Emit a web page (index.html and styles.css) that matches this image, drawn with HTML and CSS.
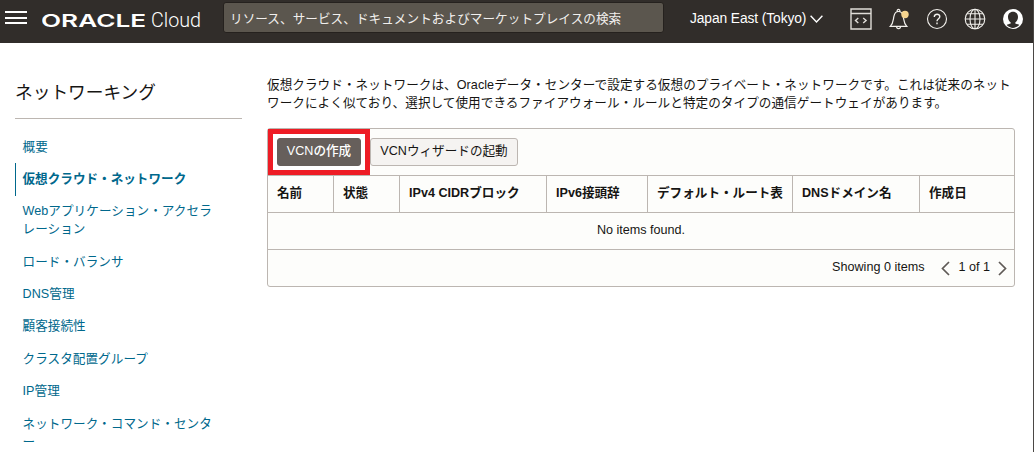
FILE: index.html
```html
<!DOCTYPE html>
<html lang="ja">
<head>
<meta charset="utf-8">
<title>Oracle Cloud</title>
<link rel="stylesheet" href="styles.css">
</head>
<body>
<div class="app">
<header class="topbar">
  <svg class="menu" width="22" height="14" viewBox="0 0 22 14"><path d="M0 1h22M0 7h22M0 12h22" stroke="#fff" stroke-width="2"/></svg>
  <svg class="logo" width="160" height="24" viewBox="0 0 160 24"><text class="oracle" x="-1" y="19" textLength="105" lengthAdjust="spacingAndGlyphs">ORACLE</text><text class="cloud" x="109" y="19" textLength="50" lengthAdjust="spacingAndGlyphs">Cloud</text></svg>
  <div class="search">リソース、サービス、ドキュメントおよびマーケットプレイスの検索</div>
  <div class="region">Japan East (Tokyo)</div>
  <svg class="chev" width="13" height="8" viewBox="0 0 13 8"><path d="M.6.8 6.5 7 12.4.8" fill="none" stroke="#fff" stroke-width="1.4"/></svg>
  <div class="tools">
    <svg width="22" height="22" viewBox="0 0 22 22"><path d="M1 1h20v20H1zM1 5.5h20M8.300 10 5.500 12.500l2.800 2.600M13.200 10l2.900 2.500-2.900 2.600" fill="none" stroke="#e0ddd8" stroke-width="1.400"/></svg>
    <svg width="22" height="22" viewBox="0 0 22 22"><path d="M2.300 18.300c3.200-3.200 2.800-6.200 3.600-10C6.600 5 8 3.500 10.500 3.500S14.500 5 15.200 8.300c.8 3.800.4 6.800 3.600 10zM9.200 3.300c-.5-2.500 3.100-2.500 2.600 0M8.600 18.600c0 2.800 3.900 2.800 3.900 0" fill="none" stroke="#f2f0ec" stroke-width="1.200"/><circle cx="17" cy="6.500" r="3.700" fill="#f6d58f"/></svg>
    <svg width="22" height="22" viewBox="0 0 22 22"><circle cx="11" cy="11" r="9.500" fill="none" stroke="#f2f0ec" stroke-width="1.100"/><path d="M8.300 8.900C8.300 5.200 13.900 5.500 13.800 8.800 13.700 10.800 11 10.700 11 13.200M11 14.600v1.600" fill="none" stroke="#f2f0ec" stroke-width="1.400"/></svg>
    <svg width="22" height="22" viewBox="0 0 22 22"><g fill="none" stroke="#f2f0ec" stroke-width="1.100"><circle cx="11" cy="11" r="9.800"/><ellipse cx="11" cy="11" rx="5" ry="9.800"/><path d="M11 1v20M1 11h20M2.800 5.700h16.400M2.800 16.300h16.400"/></g></svg>
    <svg width="22" height="22" viewBox="0 0 22 22"><circle cx="11" cy="11" r="10" fill="#fff"/><path d="M11 3.800c-3.300 0-5 2.300-5 5.200 0 2.500 1.200 4.300 2.700 5.400v1.200c-1.200.5-3.200.8-4 1.400C6.400 18.700 8.600 19.900 11 19.900s4.600-1.200 6.300-2.900c-.8-.6-2.800-.9-4-1.400v-1.200C14.800 13.300 16 11.500 16 9c0-2.900-1.700-5.200-5-5.200z" fill="#312d2a"/></svg>
  </div>
</header>
<div class="body">
  <aside class="side">
    <h1>ネットワーキング</h1>
    <ul>
      <li>概要</li>
      <li class="on">仮想クラウド・ネットワーク</li>
      <li>Webアプリケーション・アクセラ<br>レーション</li>
      <li>ロード・バランサ</li>
      <li>DNS管理</li>
      <li>顧客接続性</li>
      <li>クラスタ配置グループ</li>
      <li>IP管理</li>
      <li>ネットワーク・コマンド・センタ<br>ー</li>
    </ul>
  </aside>
  <main class="main">
    <p>仮想クラウド・ネットワークは、Oracleデータ・センターで設定する仮想のプライベート・ネットワークです。これは従来のネット<br>ワークによく似ており、選択して使用できるファイアウォール・ルールと特定のタイプの通信ゲートウェイがあります。</p>
    <section class="panel">
      <div class="actions">
        <div class="mark"><button class="btn primary">VCNの作成</button></div>
        <button class="btn">VCNウィザードの起動</button>
      </div>
      <div class="head">
        <div>名前</div><div>状態</div><div>IPv4 CIDRブロック</div><div>IPv6接頭辞</div><div>デフォルト・ルート表</div><div>DNSドメイン名</div><div>作成日</div>
      </div>
      <div class="empty">No items found.</div>
      <div class="foot">
        <span class="count">Showing 0 items</span>
        <svg width="9" height="15" viewBox="0 0 9 15"><path d="M8 1 1.500 7.500 8 14" fill="none" stroke="#5f5a56" stroke-width="1.700"/></svg>
        <span class="page">1 of 1</span>
        <svg width="9" height="15" viewBox="0 0 9 15"><path d="M1 1l6.500 6.500L1 14" fill="none" stroke="#5f5a56" stroke-width="1.700"/></svg>
      </div>
    </section>
  </main>
</div>
</div>
</body>
</html>
```
FILE: styles.css
```css
* { box-sizing: border-box; }
body {
  margin: 0;
  background: #fff;
  color: #161513;
  font: 12.6px/18px "Liberation Sans", "Noto Sans CJK JP", sans-serif;
  white-space: nowrap;
}
.app { height: 452px; overflow: hidden; border-right: 1px solid #4b4845; }
.topbar {
  display: flex;
  height: 43px;
  padding-left: 5px;
  background: #312d2a;
  color: #fff;
}
.topbar > * { flex: none; }
.menu { margin-top: 11px; }
.logo { margin: 8px 0 0 15px; }
.oracle { font: 600 17.8px Inter, sans-serif; fill: #fff; }
.cloud { font: 300 20px Roboto, sans-serif; fill: #fff; }
.search {
  width: 441px;
  height: 31px;
  margin: 2px 0 0 21px;
  padding: 0 6px;
  border: 1px solid #25211e;
  border-radius: 3px;
  background: #5b564e;
  color: #f1efed;
  letter-spacing: .06px;
  line-height: 33px;
}
.region { width: 117px; margin: 10px 0 0 26px; font-size: 13.8px; letter-spacing: -.1px; }
.chev { margin: 15px 0 0 3px; }
.tools { display: flex; gap: 16px; margin: 8px 0 0 27px; }
.body { display: flex; }
.side { width: 227px; margin-left: 15px; }
h1 {
  height: 76px;
  margin: 0;
  padding-top: 37px;
  border-bottom: 1px solid #bcb6b1;
  font-size: 17.7px;
  font-weight: 400;
  line-height: 26px;
}
ul { margin: 12px 0 0; padding: 0; list-style: none; color: #00688c; letter-spacing: .05px; }
li { padding: 6.500px 0 7.900px 7.500px; }
.on { border-left: 1px solid #00688c; padding-left: 6.500px; font-weight: 700; letter-spacing: 0; }
.main { width: 748px; margin-left: 25px; }
p { margin: 33px 0 16px; line-height: 18px; letter-spacing: .055px; }
.panel { border: 1px solid #bcb6b1; border-radius: 3px; background: #fdfdfb; }
.actions { display: flex; height: 47px; border-bottom: 1px solid #bcb6b1; }
.mark { width: 102px; height: 46px; padding: 4px; border: 5px solid #ee1c25; background: #fff; }
.btn {
  width: 148px;
  height: 28px;
  margin: 9px 0 0;
  padding: 0 0 2px;
  border: 1px solid #bcb6b1;
  border-radius: 3px;
  background: #f5f3f1;
  color: #161513;
  font: inherit;
}
.primary {
  display: block;
  width: 84px;
  margin: 0;
  border-color: #665f5b;
  background: #665f5b;
  color: #fff;
  font-weight: 500;
}
.head { display: grid; grid-template-columns: 66px 66px 147px 101px 145px 127px 1fr; height: 37px; border-bottom: 1px solid #bcb6b1; font-weight: 700; line-height: 34px; }
.head div { padding-left: 9px; border-right: 1px solid #bcb6b1; }
.head div:last-child { border: 0; }
.empty { height: 37px; border-bottom: 1px solid #bcb6b1; text-align: center; line-height: 34px; }
.foot { display: flex; height: 36px; justify-content: flex-end; padding-right: 7px; line-height: 34px; }
.foot svg { margin-top: 11px; }
.count { margin-right: 17px; }
.page { margin: 0 8px 0 8px; }
```
